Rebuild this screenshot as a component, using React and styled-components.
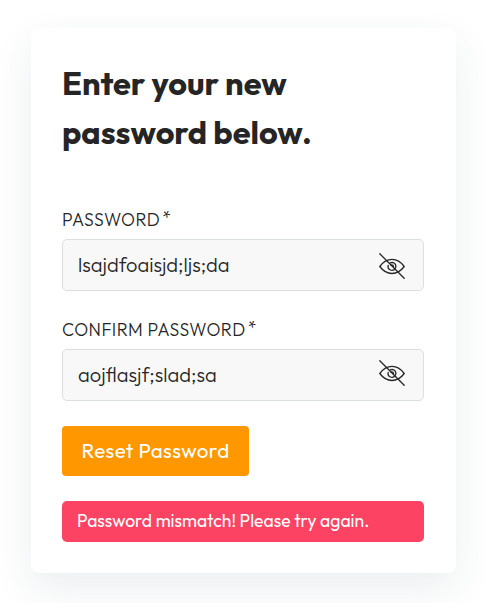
import React from "react";
import styled, { createGlobalStyle } from "styled-components";

const GlobalStyle = createGlobalStyle`
  *, *::before, *::after { box-sizing: border-box; }
  body {
    margin: 0;
    background: #fff;
    color: #252525;
    font-family: Outfit, Lato, sans-serif;
  }
`;

const Page = styled.main`
  min-height: 603px;
  padding: 28px 30px 30px 31px;
  overflow: hidden;
`;

const Card = styled.form`
  display: flex;
  flex-direction: column;
  align-items: flex-start;
  height: 545px;
  padding: 30px 32px 31px 31px;
  border-radius: 8px;
  background: #fff;
  box-shadow: 0 15px 40px rgba(33, 62, 82, 0.09);
`;

const Title = styled.h1`
  margin: 0 0 53px;
  font-size: 32.5px;
  font-weight: 700;
  line-height: 49px;
  white-space: nowrap;
`;

const TitleLine = styled.span`
  display: block;
`;

const Field = styled.div`
  width: 100%;
  height: 82px;
  margin-bottom: ${({ $gap }) => $gap};
`;

const Label = styled.label`
  display: flex;
  height: 30px;
  font-size: 17.6px;
  font-weight: 300;
  line-height: 22px;
  letter-spacing: 0.46px;
  white-space: nowrap;
`;

const Required = styled.span`
  margin-left: 2px;
  font-size: 18px;
  line-height: 17px;
`;

const InputBox = styled.div`
  display: flex;
  align-items: center;
  justify-content: space-between;
  height: 52px;
  padding: 0 18px 0 15px;
  border: 1px solid #dcdfdf;
  border-radius: 5px;
  background: #f8f8f8;
`;

const Value = styled.span`
  font-size: 20.1px;
  font-weight: 300;
  line-height: 50px;
  white-space: nowrap;
`;

const EyeSvg = styled.svg`
  display: block;
  flex: none;
  margin-top: ${({ $shift }) => $shift};
  fill: none;
  stroke: #252525;
  stroke-width: 1.3;
  stroke-linecap: round;
`;

const Button = styled.button`
  width: 187px;
  height: 50px;
  flex: none;
  padding: 0 0 2px;
  border: 0;
  border-radius: 4px;
  background: #ff9800;
  color: #fff;
  font: 400 20.5px/48px Outfit, Lato, sans-serif;
  letter-spacing: 0.4px;
  white-space: nowrap;
`;

const Alert = styled.div`
  width: 100%;
  height: 41px;
  margin-top: 25px;
  padding-left: 15px;
  border-radius: 5px;
  background: #fc4363;
  color: #fff;
  font-size: 17.5px;
  font-weight: 400;
  line-height: 40px;
  white-space: nowrap;
`;

function EyeOff({ shift }) {
  return (
    <EyeSvg $shift={shift} width="26" height="26" viewBox="0 0 26 26" aria-hidden="true">
      <path d="M.8 13.500C4.200 8.800 8.300 6.400 13 6.400s8.800 2.400 12.200 7.100C21.800 18.100 17.700 20.500 13 20.500S4.200 18.100.8 13.500Z" />
      <path d="M11.300 9.900a3.900 3.900 0 1 1 .2 7.100a3.900 3.900 0 0 1-2.300-4.600" />
      <path d="M12 12.300a1.500 1.500 0 0 1 2.400 1.700" />
      <path d="M.8.8 25.200 25.200" />
    </EyeSvg>
  );
}

function PasswordField({ label, value, gap, iconShift }) {
  return (
    <Field $gap={gap}>
      <Label>
        {label}
        <Required>*</Required>
      </Label>
      <InputBox>
        <Value>{value}</Value>
        <EyeOff shift={iconShift} />
      </InputBox>
    </Field>
  );
}

export default function App() {
  return (
    <>
      <GlobalStyle />
      <Page>
        <Card>
          <Title>
            <TitleLine>Enter your new</TitleLine>
            <TitleLine>password below.</TitleLine>
          </Title>
          <PasswordField label="PASSWORD" value="lsajdfoaisjd;ljs;da" gap="28px" iconShift="2px" />
          <PasswordField label="CONFIRM PASSWORD" value="aojflasjf;slad;sa" gap="25px" iconShift="-5px" />
          <Button type="button">Reset Password</Button>
          <Alert role="alert">Password mismatch! Please try again.</Alert>
        </Card>
      </Page>
    </>
  );
}
